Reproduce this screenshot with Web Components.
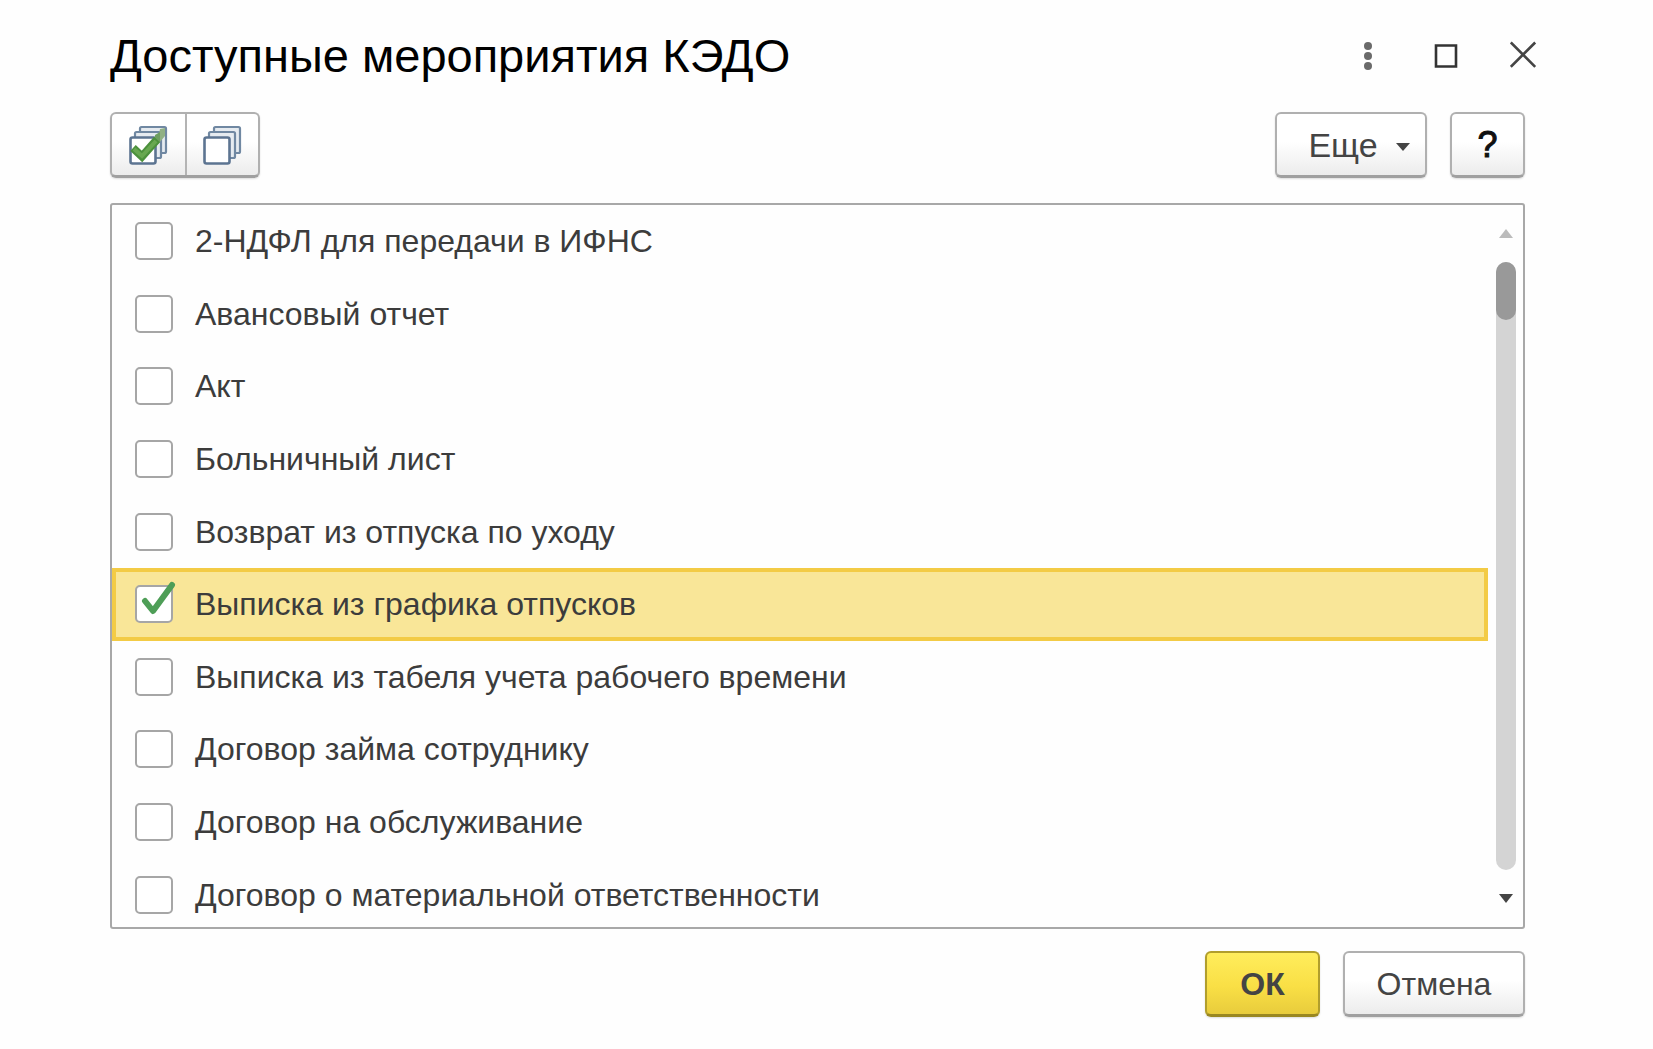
<!DOCTYPE html>
<html lang="ru">
<head>
<meta charset="utf-8">
<title>Доступные мероприятия КЭДО</title>
<style>
  html, body { height: 100%; }
  body { margin: 0; background: #fefefe; font-family: "Liberation Sans", Arial, sans-serif; }
</style>
</head>
<body>
<kedo-dialog heading="Доступные мероприятия КЭДО">
  <kedo-button-group slot="commands"></kedo-button-group>
  <kedo-button slot="extra" kind="menu">Еще</kedo-button>
  <kedo-button slot="extra" kind="help">?</kedo-button>
  <kedo-list>
    <kedo-option>2-НДФЛ для передачи в ИФНС</kedo-option>
    <kedo-option>Авансовый отчет</kedo-option>
    <kedo-option>Акт</kedo-option>
    <kedo-option>Больничный лист</kedo-option>
    <kedo-option>Возврат из отпуска по уходу</kedo-option>
    <kedo-option checked>Выписка из графика отпусков</kedo-option>
    <kedo-option>Выписка из табеля учета рабочего времени</kedo-option>
    <kedo-option>Договор займа сотруднику</kedo-option>
    <kedo-option>Договор на обслуживание</kedo-option>
    <kedo-option>Договор о материальной ответственности</kedo-option>
  </kedo-list>
  <kedo-button slot="footer" kind="primary">ОК</kedo-button>
  <kedo-button slot="footer" kind="plain">Отмена</kedo-button>
</kedo-dialog>

<script>
class KedoDialog extends HTMLElement {
  constructor() {
    super();
    this.attachShadow({ mode: 'open' }).innerHTML = `
      <style>
        :host { display: flex; flex-direction: column; box-sizing: border-box; height: 100vh; min-height: 600px; padding: 24px 128px 32px 110px; }
        header { display: flex; align-items: center; justify-content: space-between; height: 64px; margin-right: -13px; }
        h1 { margin: 0; font-size: 47px; line-height: 64px; font-weight: 400; color: #000; white-space: nowrap; }
        nav { display: flex; align-items: center; gap: 52px; }
        nav button { display: flex; padding: 0; border: 0; background: none; }
        .bar { display: flex; justify-content: space-between; margin: 24px 0 25px; }
        .side { display: flex; gap: 23px; }
        footer { display: flex; justify-content: flex-end; gap: 23px; margin-top: 22px; }
        ::slotted(kedo-list) { flex: 1; min-height: 0; }
      </style>
      <header>
        <h1></h1>
        <nav>
          <button type="button" aria-label="Меню окна"><svg width="28" height="32" viewBox="0 0 28 32" fill="#6a6a6a"><circle cx="14" cy="6" r="4"/><circle cx="14" cy="16" r="4"/><circle cx="14" cy="26" r="4"/></svg></button>
          <button type="button" aria-label="Развернуть"><svg width="24" height="32" viewBox="0 0 24 32" fill="none" stroke="#333" stroke-width="2.600"><path d="M2 5.500h20v21h-20z"/></svg></button>
          <button type="button" aria-label="Закрыть"><svg width="28" height="32" viewBox="0 0 28 32" fill="none" stroke="#444" stroke-width="2.600"><path d="M.8 2.500l24.400 24.400M25.200 2.500L.8 26.900"/></svg></button>
        </nav>
      </header>
      <div class="bar">
        <slot name="commands"></slot>
        <div class="side"><slot name="extra"></slot></div>
      </div>
      <slot></slot>
      <footer><slot name="footer"></slot></footer>`;
  }
  connectedCallback() {
    this.shadowRoot.querySelector('h1').textContent = this.getAttribute('heading');
  }
}

class KedoButtonGroup extends HTMLElement {
  constructor() {
    super();
    const sheets = `
      <path fill="#e6ebf0" stroke="#7088a2" stroke-width="2.200" d="M11 7V3.500Q11 2 12.500 2H35.500Q37 2 37 3.500V26.500Q37 28 35.500 28H32"/>
      <path fill="#e6ebf0" stroke="#7088a2" stroke-width="2.200" d="M6 12V8.500Q6 7 7.500 7H30.500Q32 7 32 8.500V31.500Q32 33 30.500 33H27"/>
      <rect x="1.500" y="12.500" width="25" height="26" rx="2" fill="#fff" stroke="#5c7491" stroke-width="2.600"/>`;
    this.attachShadow({ mode: 'open' }).innerHTML = `
      <style>
        :host { display: flex; box-sizing: border-box; height: 66px; border: 2px solid #b0b0b0; border-bottom: 3px solid #a0a0a0; border-radius: 6px; background: linear-gradient(#fff 45%, #ececec); box-shadow: 0 1px 2px #0002; }
        button { display: flex; align-items: center; justify-content: center; width: 73px; padding: 0; border: 0; background: none; }
        button + button { border-left: 2px solid #b4b4b4; }
      </style>
      <button type="button" aria-label="Установить флажки"><svg width="40" height="40" viewBox="0 0 40 40" fill="none">${sheets}
        <path d="M31 4L36 3V11L30 18V9Z" fill="#91b184"/><path d="M26 10L31 7V17L26 22Z" fill="#6f9f60"/>
        <path d="M4 23L13 31.500L28 14.500" stroke="#4c913c" stroke-width="8"/><path d="M5 24L13 31L27 16" stroke="#68a850" stroke-width="4"/></svg></button>
      <button type="button" aria-label="Снять флажки"><svg width="40" height="40" viewBox="0 0 40 40" fill="none">${sheets}</svg></button>`;
  }
}

class KedoButton extends HTMLElement {
  constructor() {
    super();
    this.attachShadow({ mode: 'open' }).innerHTML = `
      <style>
        :host { display: block; }
        button { display: flex; align-items: center; justify-content: center; box-sizing: border-box; height: 66px; padding: 0 36px; border: 2px solid #b0b0b0; border-bottom: 3px solid #a0a0a0; border-radius: 6px; background: linear-gradient(#fff 45%, #ececec); box-shadow: 0 1px 2px #0002; color: #444; font-family: inherit; font-size: 32px; line-height: 40px; }
        :host([kind="menu"]) button { width: 152px; gap: 18px; padding: 0 14px 0 30px; font-size: 34px; }
        :host([kind="help"]) button { width: 75px; padding: 0; color: #111; font-size: 36px; -webkit-text-stroke: 1px #111; }
        :host([kind="primary"]) button { width: 115px; padding: 0; border-color: #b19e2c; border-bottom-color: #998721; background: linear-gradient(#ffed5c, #f9df45 55%, #e8cc3c); font-weight: 700; }
        :host([kind="plain"]) button { width: 182px; padding: 0; }
        svg { display: none; flex: none; margin-top: 4px; }
        :host([kind="menu"]) svg { display: block; }
      </style>
      <button type="button"><slot></slot><svg width="14" height="8" viewBox="0 0 14 8"><path d="M0 0h14L7 8z" fill="#444"/></svg></button>`;
  }
}

class KedoList extends HTMLElement {
  constructor() {
    super();
    this.attachShadow({ mode: 'open' }).innerHTML = `
      <style>
        :host { display: flex; box-sizing: border-box; overflow: hidden; border: 2px solid #a8a8a8; border-radius: 3px; }
        .rows { display: flex; flex: 1; flex-direction: column; margin-bottom: -4px; }
        .scroll { display: flex; flex-direction: column; align-items: center; width: 35px; padding: 24px 0; box-sizing: border-box; }
        .track { flex: 1; width: 20px; margin: 24px 0; border-radius: 10px; background: #d4d4d4; }
        .thumb { height: 58px; border-radius: 10px; background: #999; }
        ::slotted(kedo-option) { flex: 1 0 0; }
      </style>
      <div class="rows"><slot></slot></div>
      <div class="scroll" aria-hidden="true">
        <svg width="14" height="9" viewBox="0 0 14 9"><path d="M0 9h14L7 0z" fill="#bbb"/></svg>
        <div class="track"><div class="thumb"></div></div>
        <svg width="14" height="9" viewBox="0 0 14 9"><path d="M0 0h14L7 9z" fill="#444"/></svg>
      </div>`;
  }
}

class KedoOption extends HTMLElement {
  constructor() {
    super();
    this.attachShadow({ mode: 'open' }).innerHTML = `
      <style>
        :host { display: flex; box-sizing: border-box; border: 4px solid transparent; color: #3c3c3c; }
        :host([checked]) { border-color: #f3cb45; background: #f9e698; }
        label { display: flex; flex: 1; align-items: center; gap: 22px; padding-left: 19px; font-size: 32px; line-height: 40px; white-space: nowrap; }
        .box { display: grid; width: 38px; height: 38px; }
        .box > * { grid-area: 1 / 1; }
        input { appearance: none; box-sizing: border-box; width: 38px; height: 38px; margin: 0; border: 2px solid #a6a6a6; border-radius: 5px; background: #fff; }
        svg { display: none; overflow: visible; pointer-events: none; }
        input:checked + svg { display: block; }
      </style>
      <label><span class="box"><input type="checkbox"><svg width="38" height="38" viewBox="0 0 38 38" fill="none" stroke="#4e9e57" stroke-width="6" stroke-linecap="round" stroke-linejoin="round"><path d="M10 16L18 26L37 0"/></svg></span><span><slot></slot></span></label>`;
  }
  connectedCallback() {
    const input = this.shadowRoot.querySelector('input');
    input.checked = this.hasAttribute('checked');
    input.addEventListener('change', () => this.toggleAttribute('checked', input.checked));
  }
}

customElements.define('kedo-dialog', KedoDialog);
customElements.define('kedo-button-group', KedoButtonGroup);
customElements.define('kedo-button', KedoButton);
customElements.define('kedo-list', KedoList);
customElements.define('kedo-option', KedoOption);
</script>
</body>
</html>
